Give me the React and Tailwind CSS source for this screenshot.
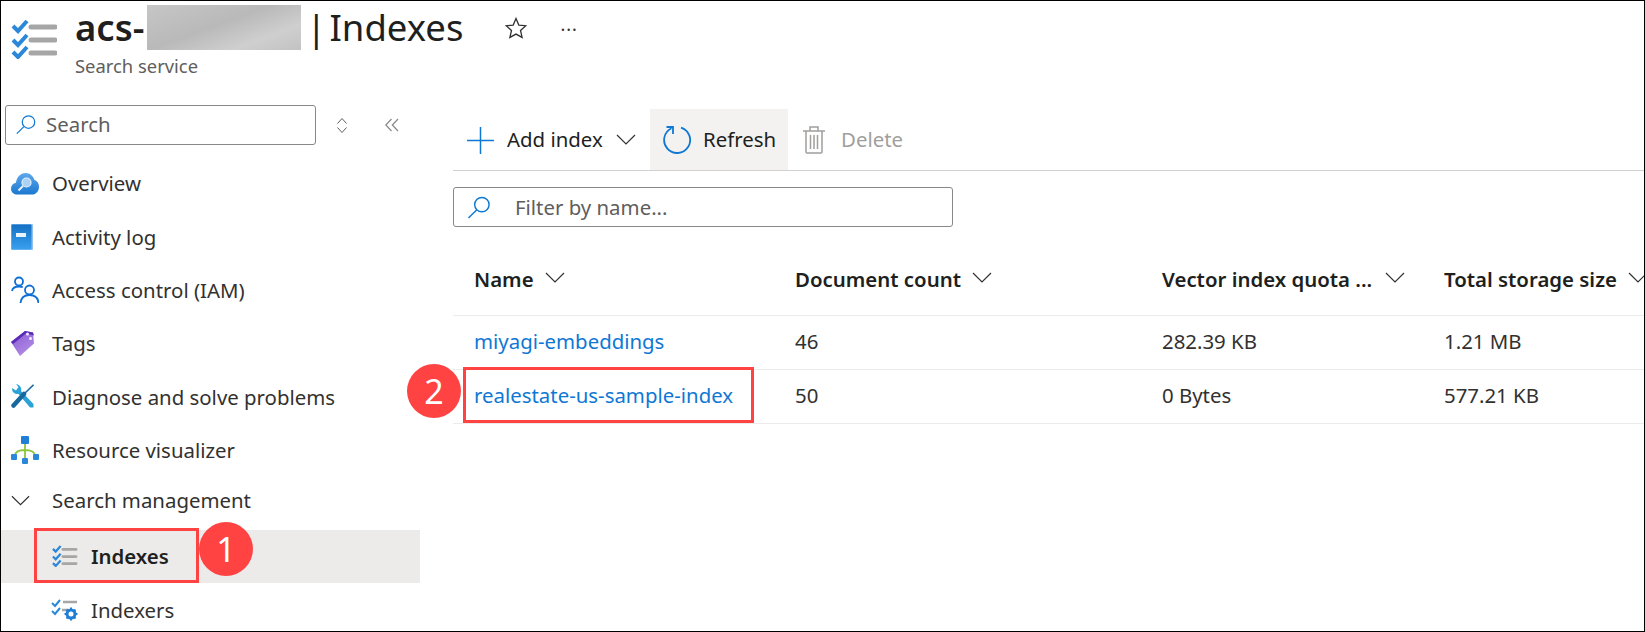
// App.jsx
import React from 'react';

function ChecklistIcon({ className }) {
  return (
    <svg className={className} viewBox="0 0 46 40" fill="none">
      <path d="M2 7l5 5 9-10" stroke="#2b88d8" strokeWidth="4" />
      <path d="M2 21l5 5 9-10" stroke="#2b88d8" strokeWidth="4" />
      <path d="M2 33l5 5 9-10" stroke="#2b88d8" strokeWidth="4" />
      <path d="M20 8h24M20 21h24M20 34h24" stroke="#a6a6a6" strokeWidth="5" strokeLinecap="round" />
    </svg>
  );
}

function IndexersIcon({ className }) {
  return (
    <svg className={className} viewBox="0 0 27 22" fill="none">
      <path d="M1 4l3 3 5-6M1 12l3 3 5-6" stroke="#2b88d8" strokeWidth="2" />
      <path d="M12 3h14M11 11h7" stroke="#a6a6a6" strokeWidth="2.4" />
      <circle cx="20" cy="15" r="4" stroke="#1f7fd6" strokeWidth="3" />
      <path d="M20 8.5v3M20 18.5v3M13.5 15h3M23.5 15h3M15.5 10.5l2 2M22.5 17.5l2 2M24.5 10.5l-2 2M17.500 17.5l-2 2" stroke="#1f7fd6" strokeWidth="2" />
    </svg>
  );
}

function SearchIcon({ className }) {
  return (
    <svg className={className} viewBox="0 0 24 24" fill="none" stroke="#0f78d4" strokeWidth="1.5">
      <circle cx="15" cy="9" r="7.5" />
      <path d="M9.5 14.500L1 23" />
    </svg>
  );
}

function Chevron({ className, color = '#323130' }) {
  return (
    <svg className={className} viewBox="0 0 20 11" fill="none" stroke={color} strokeWidth="1.200">
      <path d="M1 1l9 9 9-9" />
    </svg>
  );
}

function OverviewIcon() {
  return (
    <svg className="w-[28px] h-[22px]" viewBox="0 0 28 22">
      <defs>
        <linearGradient id="cloud" x1="0" y1="0" x2="0" y2="1">
          <stop offset="0" stopColor="#5ea8ec" />
          <stop offset="1" stopColor="#1b78d0" />
        </linearGradient>
      </defs>
      <path d="M6 21.500C2.500 21.500 0 19 0 15.500c0-3 2-5.300 5-5.800C5.600 4.300 9.500 0 14.500 0c4.300 0 7.700 2.800 8.700 6.800 2.800.8 4.800 3.500 4.800 6.900 0 4.500-3 7.800-7 7.800z" fill="url(#cloud)" />
      <circle cx="15.500" cy="9.500" r="4.500" fill="#a9d3f5" stroke="#e6f2fb" strokeWidth="1.200" />
      <path d="M12 13l-4.500 4.500" stroke="#e6f2fb" strokeWidth="2" />
    </svg>
  );
}

function ActivityIcon() {
  return (
    <svg className="w-[22px] h-[26px]" viewBox="0 0 22 26">
      <defs>
        <linearGradient id="book" x1="0" y1="0" x2="0" y2="1">
          <stop offset="0" stopColor="#1470c4" />
          <stop offset="1" stopColor="#39a0ee" />
        </linearGradient>
      </defs>
      <rect x="0" y="0" width="22" height="26" rx="1" fill="#8fc3ee" />
      <rect x="0.500" y="0.500" width="20" height="25" rx="1" fill="url(#book)" />
      <rect x="5" y="9" width="10" height="4" fill="#e8f3fc" />
    </svg>
  );
}

function AccessIcon() {
  return (
    <svg className="w-[28px] h-[28px]" viewBox="0 0 28 28" fill="none" stroke="#0f6fd6" strokeWidth="1.800">
      <circle cx="8" cy="5.500" r="4" />
      <path d="M1 15c.5-3 3-4.500 7-4.500 1.500 0 2.800.2 3.800.8" />
      <circle cx="18.500" cy="14" r="4.500" />
      <path d="M9.500 27c.5-5 4-8 9-8s8.500 3 9 8" />
    </svg>
  );
}

function TagIcon() {
  return (
    <svg className="w-[23px] h-[25px]" viewBox="0 0 23 25">
      <defs>
        <linearGradient id="tag" x1="0" y1="0" x2="0.600" y2="1">
          <stop offset="0" stopColor="#8a5ad4" />
          <stop offset="1" stopColor="#b08ae4" />
        </linearGradient>
      </defs>
      <path d="M0 11L14 0l8 1.500 1 11L9 25z" fill="url(#tag)" />
      <path d="M0 11L14 0l8 1.500 1 3-8-2L2 13z" fill="#5b2bb8" />
      <circle cx="16.500" cy="3" r="1.500" fill="#f3edfb" />
      <circle cx="19.500" cy="7.500" r="1.500" fill="#f3edfb" />
    </svg>
  );
}

function WrenchIcon() {
  return (
    <svg className="w-[23px] h-[25px]" viewBox="0 0 23 25" fill="none">
      <path d="M1 4a5.500 5.500 0 0 0 6.500 6L19 23.500h3.500V20L10 7A5.500 5.500 0 0 0 5 0l2.500 3L5 6.500z" fill="#2ba3d8" />
      <path d="M22.500.8L13 10" stroke="#1a6fa8" strokeWidth="1.600" />
      <path d="M13 10L2.500 21.500" stroke="#17689e" strokeWidth="4.500" strokeLinecap="round" />
    </svg>
  );
}

function VisualizerIcon() {
  return (
    <svg className="w-[28px] h-[28px]" viewBox="0 0 28 28" fill="none">
      <path d="M14 6v16M4 20c0-4 4-6 10-6s10 2 10 6" stroke="#8cc63f" strokeWidth="1.800" />
      <rect x="10" y="0" width="8" height="8" rx="1" fill="#1f7fd6" />
      <rect x="0" y="18" width="6" height="6" rx="1" fill="#2b88d8" />
      <rect x="22" y="18" width="6" height="6" rx="1" fill="#2b88d8" />
      <rect x="11" y="22" width="6" height="6" rx="1" fill="#2b88d8" />
    </svg>
  );
}

function RefreshIcon() {
  return (
    <svg className="w-[28px] h-[28px]" viewBox="0 0 28 28" fill="none" stroke="#0f78d4" strokeWidth="1.800">
      <path d="M18 1.600A13 13 0 1 1 8.500 2.300" />
      <path d="M3.500 1h6.500v7" />
    </svg>
  );
}

function TrashIcon() {
  return (
    <svg className="w-[22px] h-[28px]" viewBox="0 0 22 28" fill="none" stroke="#a19f9d" strokeWidth="1.500">
      <path d="M0 5h22M3 5v21a1 1 0 0 0 1 1h14a1 1 0 0 0 1-1V5M7 5V1h8v4M7.500 9v14M11 9v14M14.500 9v14" />
    </svg>
  );
}

function NavItem({ icon, label, className = 'pt-[2px]' }) {
  return (
    <div className={`flex items-center h-[53.3px] ${className}`}>
      <div className="w-[51px] pl-[10px] flex justify-start">{icon}</div>
      <span className="text-[#323130]">{label}</span>
    </div>
  );
}

function Marker({ className, n }) {
  return (
    <div className={`absolute w-[54px] h-[54px] rounded-full bg-[#ff4343] text-white flex items-center justify-center text-[34px] ${className}`}>
      {n}
    </div>
  );
}

function TableHead({ label, chevron }) {
  return (
    <div className="flex items-center whitespace-nowrap font-semibold text-[#201f1e]">
      <span>{label}</span>
      <Chevron className={`w-[20px] h-[11px] shrink-0 mb-[4px] ${chevron}`} />
    </div>
  );
}

function App() {
  return (
    <div className="relative w-[1645px] h-[632px] overflow-hidden border border-black bg-white text-[20.4px] font-['Noto_Sans',sans-serif]">
      <header className="flex h-[104px] pl-[10px] pt-[8px]">
        <ChecklistIcon className="w-[46px] h-[40px] mt-[10px]" />
        <div className="ml-[18px]">
          <div className="flex items-center h-[47px] -mt-[5px] text-[36.5px] text-[#201f1e] leading-none">
            <span className="font-semibold">acs-</span>
            <div className="w-[154px] h-[45px] ml-[3px] bg-[linear-gradient(160deg,#c6c6c6,#b9b9b9_45%,#cfcfcf_75%,#c2c2c2)]" />
            <span className="ml-[5px]">|</span>
            <span className="ml-[3px]">Indexes</span>
            <svg className="w-[22px] h-[22px] ml-[42px]" viewBox="0 0 22 22" fill="none" stroke="#323130" strokeWidth="1.300">
              <path d="M11 1.500l2.800 6.600 7 .6-5.300 4.700 1.600 7L11 17.100l-6.100 3.300 1.600-7L1.200 8.700l7-.6z" />
            </svg>
            <span className="ml-[33px] mb-[8px] text-[18px] tracking-[1px] text-[#323130]">...</span>
          </div>
          <div className="mt-[1px] text-[18.4px] text-[#605e5c]">Search service</div>
        </div>
      </header>

      <div className="flex">
        <aside className="w-[419px] shrink-0">
          <div className="flex items-center pl-[4px]">
            <div className="flex items-center w-[311px] h-[40px] rounded-[3px] border border-[#8a8886] pl-[10px] pb-[2px]">
              <SearchIcon className="w-[20px] h-[21px]" />
              <span className="ml-[10px] text-[#605e5c]">Search</span>
            </div>
            <svg className="w-[12px] h-[17px] ml-[20px]" viewBox="0 0 12 17" fill="none" stroke="#605e5c">
              <path d="M1.500 6.500L6 1.500l4.500 5M1.500 10.500l4.500 5 4.500-5" />
            </svg>
            <svg className="w-[14px] h-[14px] ml-[37px]" viewBox="0 0 14 14" fill="none" stroke="#8a8886" strokeWidth="1.200">
              <path d="M6.500 1L.8 7l5.700 6M13 1L7.300 7l5.700 6" />
            </svg>
          </div>
          <nav className="mt-[11px]">
            <NavItem icon={<OverviewIcon />} label="Overview" />
            <NavItem icon={<ActivityIcon />} label="Activity log" />
            <NavItem icon={<AccessIcon />} label="Access control (IAM)" />
            <NavItem icon={<TagIcon />} label="Tags" />
            <NavItem icon={<WrenchIcon />} label="Diagnose and solve problems" />
            <NavItem icon={<VisualizerIcon />} label="Resource visualizer" />
            <NavItem className="h-[54px] pb-[4px]" icon={<Chevron className="w-[19px] h-[11px]" />} label="Search management" />
            <div className="flex items-center h-[53.4px] bg-[#edebe9] pl-[50px]">
              <ChecklistIcon className="w-[27px] h-[22px]" />
              <span className="ml-[13px] font-semibold text-[#201f1e]">Indexes</span>
            </div>
            <div className="flex items-center h-[53.4px] pl-[50px]">
              <IndexersIcon className="w-[27px] h-[22px]" />
              <span className="ml-[13px] text-[#323130]">Indexers</span>
            </div>
          </nav>
        </aside>

        <main className="flex-1 min-w-0 pl-[33px] pt-[4px]">
          <div className="flex items-stretch h-[62px] border-b border-[#d2d0ce] text-[#201f1e]">
            <div className="flex items-center pl-[14px] w-[197px]">
              <svg className="w-[27px] h-[27px] mt-[2px]" viewBox="0 0 27 27" stroke="#0f78d4" strokeWidth="1.500">
                <path d="M0 13.500h27M13.500 0v27" />
              </svg>
              <span className="ml-[13px]">Add index</span>
              <Chevron className="w-[20px] h-[11px] ml-[13px]" />
            </div>
            <div className="flex items-center w-[138px] bg-[#f3f2f1] pl-[13px]">
              <RefreshIcon />
              <span className="ml-[12px]">Refresh</span>
            </div>
            <div className="flex items-center pl-[15px] text-[#a19f9d]">
              <TrashIcon />
              <span className="ml-[16px]">Delete</span>
            </div>
          </div>

          <div className="flex items-center w-[500px] h-[40px] mt-[16px] rounded-[3px] border border-[#8a8886] pl-[13px]">
            <SearchIcon className="w-[24px] h-[23px]" />
            <span className="ml-[24px] text-[#605e5c]">Filter by name...</span>
          </div>

          <div className="grid grid-cols-[321px_367px_282px_1fr] mt-[16px]">
            <div className="col-span-4 grid grid-cols-subgrid h-[73px] border-b border-[#edebe9] [&>div]:pl-[21px]">
              <TableHead label="Name" chevron="ml-[11px]" />
              <TableHead label="Document count" chevron="ml-[11px]" />
              <TableHead label="Vector index quota ..." chevron="ml-[13px]" />
              <TableHead label="Total storage size" chevron="ml-[11px]" />
            </div>
            <div className="col-span-4 grid grid-cols-subgrid items-center h-[54px] pb-[2px] border-b border-[#edebe9] text-[#323130] [&>div]:pl-[21px]">
              <div className="text-[#0f78d4]">miyagi-embeddings</div>
              <div>46</div>
              <div>282.39 KB</div>
              <div>1.21 MB</div>
            </div>
            <div className="col-span-4 grid grid-cols-subgrid items-center h-[54px] pb-[2px] border-b border-[#edebe9] text-[#323130] [&>div]:pl-[21px]">
              <div className="text-[#0f78d4]">realestate-us-sample-index</div>
              <div>50</div>
              <div>0 Bytes</div>
              <div>577.21 KB</div>
            </div>
          </div>
        </main>
      </div>

      <div className="absolute left-[33px] top-[527px] w-[165px] h-[55px] border-[3px] border-[#ff4343]" />
      <Marker className="left-[198px] top-[521px]" n="1" />
      <div className="absolute left-[462px] top-[366px] w-[291px] h-[56px] border-[3px] border-[#ff4343]" />
      <Marker className="left-[406px] top-[363px]" n="2" />
    </div>
  );
}

export default App;
